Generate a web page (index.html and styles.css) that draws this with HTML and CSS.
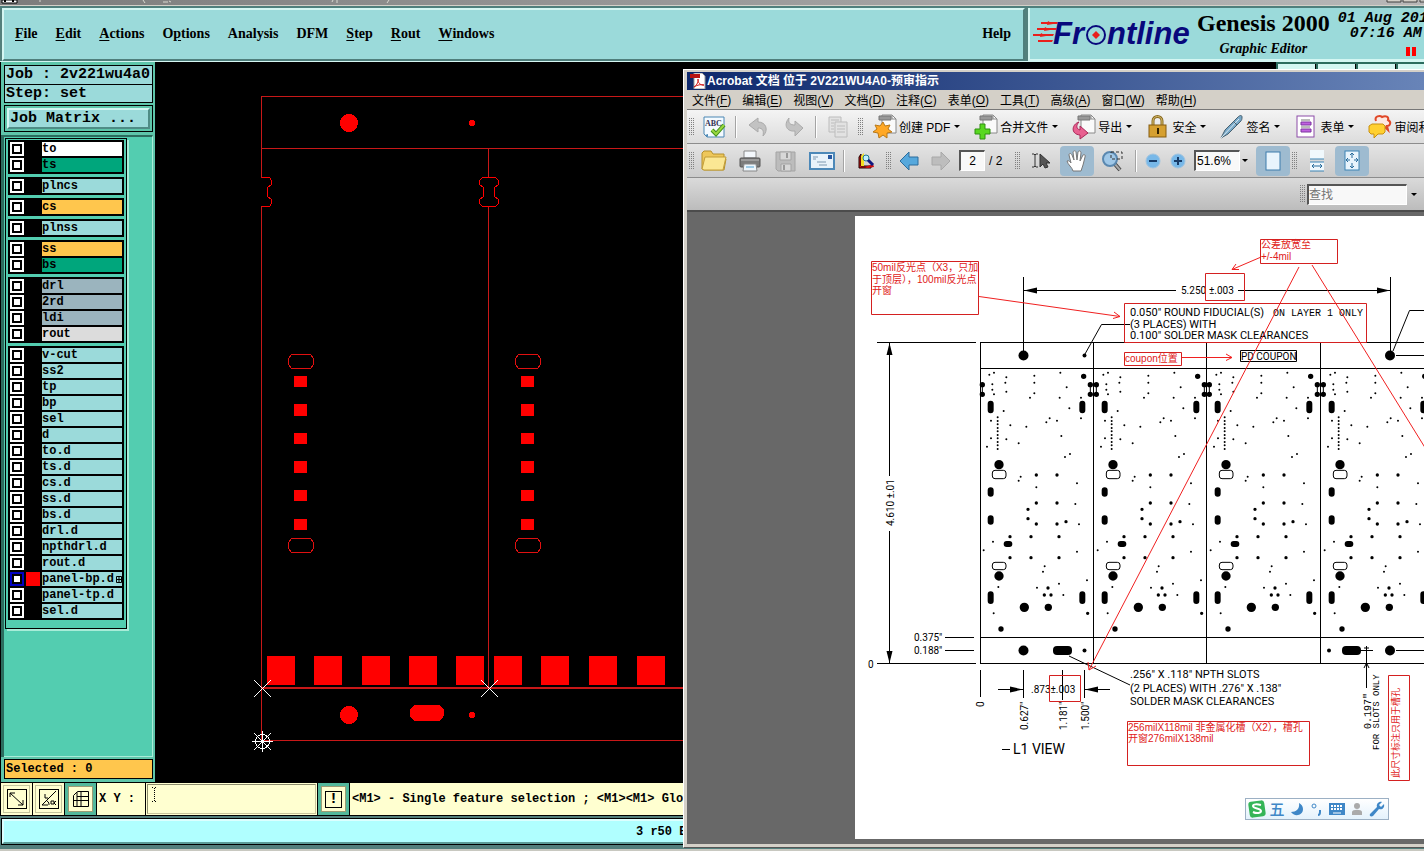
FILE: index.html
```html
<!DOCTYPE html>
<html lang="zh-CN">
<head>
<meta charset="utf-8">
<title>Genesis 2000 Graphic Editor</title>
<link rel="stylesheet" href="styles.css">
</head>
<body>
<div class="genesis">
  <div class="frame-title">
    <svg class="frame-marks" width="420" height="5"><path d="M2 0h15v3H2z" fill="#fff" stroke="#000"/><path d="M5 0v2M13 0v2" stroke="#000" stroke-width="2"/><path d="M40 0v2M143 0l2 3M163 2h5M169 1l2 1M333 0l-1 2M337 0v3M389 0l-2 3" stroke="#d8d8d0" fill="none"/></svg>
    <svg width="38" height="5"><path d="M1 0v2h14V0M17 0v2h14V0M34 0v2h6" fill="#d4d0c8" stroke="#404040"/></svg>
  </div>
  <header class="top">
    <nav class="menubar">
      <button><u>F</u>ile</button><button><u>E</u>dit</button><button><u>A</u>ctions</button><button>O<u>p</u>tions</button><button>Analysis</button><button>DFM</button><button><u>S</u>tep</button><button><u>R</u>out</button><button><u>W</u>indows</button><button class="help">Help</button>
    </nav>
    <div class="brand">
      <svg class="logo" width="164" height="40" role="img" aria-label="Frontline">
        <g fill="#e8201c"><path d="M8 6h17l-1 2H8zM4 12h20l-1 2H4zM0 18h21l-1 2H0zM5 24h15l-1 2H5z"/><path d="M15 5l5 3-6 1zM12 11l5 3-6 1zM8 17l5 3-6 1z"/></g>
        <g class="logo-text"><text x="20" y="28">Fr</text><text x="74" y="28">ntline</text></g>
        <circle cx="63" cy="19" r="9" fill="#9bdada" stroke="#08087c" stroke-width="2"/>
        <path d="M63 15l4 4-4 4-4-4z" fill="#e8201c"/>
      </svg>
      <div class="product"><strong>Genesis 2000</strong><em>Graphic Editor</em></div>
      <div class="clock"><span>01 Aug 2012</span><span>07:16 AM</span><svg width="11" height="9"><path d="M0 0h4v9H0zM6 0h4v9H6z" fill="#f00"/></svg></div>
    </div>
  </header>
  <div class="work">
    <aside class="side">
      <div class="job"><div>Job : 2v221wu4a0</div><div>Step: set</div></div>
      <div class="matrix"><button>Job Matrix ...</button></div>
      <div class="layer-well">
        <div class="layers" id="layers"></div>
      </div>
      <div class="selected">Selected : 0</div>
    </aside>
    <svg class="board" aria-label="Board view">
      <defs>
        <g id="pads"><g fill="none" stroke="#e01010"><path d="M291.500 354.500h19l3 4v6l-3 4h-19l-3-4v-6zM291.500 538.500h19l3 4v6l-3 4h-19l-3-4v-6z"/></g><path fill="#f00" d="M294 376h13v11h-13zM294 404h13v12h-13zM294 433h13v11h-13zM294 461h13v12h-13zM294 490h13v11h-13zM294 519h13v11h-13z"/></g>
      </defs>
      <g transform="translate(-155 -62)">
        <g fill="none" stroke="#c81818">
          <path d="M900 96.500H261.500V178M261.500 206V740.500H900M261 148.500H900M488.500 148V178M488.500 206V688"/>
          <path d="M261 688H900" stroke-width="2"/>
          <path d="M261.500 177.500h8l2 3v4l-4 3v9l4 3v4l-2 3h-8" stroke="#f00"/>
          <path d="M482.500 177.500h13l3 3v4l-4 3v9l4 3v4l-3 3h-13l-3-3v-4l4-3v-9l-4-3v-4z" stroke="#f00"/>
        </g>
        <g fill="#f00">
          <circle cx="349" cy="123" r="9"/><circle cx="472" cy="123" r="3"/><circle cx="349" cy="715" r="9"/><circle cx="472" cy="715" r="3"/>
          <rect x="410" y="705" width="34" height="16" rx="7"/>
          <path d="M267 656h28v29h-28zM314 656h28v29h-28zM362 656h28v29h-28zM409 656h28v29h-28zM456 656h28v29h-28zM494 656h28v29h-28zM541 656h28v29h-28zM589 656h28v29h-28zM637 656h28v29h-28z"/>
        </g>
        <use href="#pads"/><use href="#pads" x="227"/>
        <path d="M254 680l17 17M271 680l-17 17M481 680l17 17M498 680l-17 17M254 733l17 17M271 733l-17 17M262.500 731v21M252 741.500h21" stroke="#fff" fill="none"/>
        <circle cx="262.500" cy="741.500" r="7" fill="none" stroke="#fff"/>
      </g>
    </svg>
    <div class="right-tabs"><i></i><i></i><i></i><i></i></div>
  </div>
  <div class="command">
    <button class="tool" aria-label="Snap"><svg width="20" height="20"><rect x=".5" y=".5" width="19" height="19"/><path d="M3 4l13 12M3 8V4h5M16 11v5h-5"/></svg></button>
    <button class="tool" aria-label="Angle"><svg width="20" height="20"><rect x=".5" y=".5" width="19" height="19"/><path d="M17 2L3 16h6M6 5v4h3M8 12c2 1 2 3 2 4M12 12h3v3h-3zM17 12l-2 2 2 2"/></svg></button>
    <button class="tool teal" aria-label="Grid"><svg width="16" height="16"><path d="M.5 4.500l4-4h11v15H.5zM8 0v16M0 9.500h16M4 5.500h11M4 1v15"/></svg></button>
    <label class="xy" for="xy">X Y :</label>
    <div class="xy-box"><svg width="5" height="15"><path d="M0 .5h2M3 .5h2M2.500 1v13M0 14.500h2M3 14.500h2" fill="none" stroke="#000" stroke-dasharray="1 1"/></svg><input id="xy" type="text"></div>
    <button class="tool teal bang" aria-label="Alert"><b>!</b></button>
    <div class="message">&lt;M1&gt; - Single feature selection ; &lt;M1&gt;&lt;M1&gt; Global feature selection</div>
  </div>
  <div class="status"><span>3 r50 Bottom</span></div>
</div>

<section class="acrobat">
  <div class="ac-title">
    <svg width="16" height="16"><path d="M4 0h8l3 3v13H4z" fill="#fff" stroke="#999"/><path d="M0 1h10v4H0z" fill="#b81414"/><path d="M4 14c3-2 5-6 4-8-1 3 3 7 6 6-3-1-7 0-10 2z" fill="none" stroke="#d01818"/></svg>
    <h1>Acrobat 文档 位于 2V221WU4A0-预审指示</h1>
  </div>
  <nav class="ac-menu">
    <button>文件(<u>F</u>)</button><button>编辑(<u>E</u>)</button><button>视图(<u>V</u>)</button><button>文档(<u>D</u>)</button><button>注释(<u>C</u>)</button><button>表单(<u>O</u>)</button><button>工具(<u>T</u>)</button><button>高级(<u>A</u>)</button><button>窗口(<u>W</u>)</button><button>帮助(<u>H</u>)</button>
  </nav>
  <div class="bar bar-light">
    <i class="grip"></i>
    <button class="ib" aria-label="拼写检查"><svg width="24" height="24"><path d="M2 2h20v20H5l-3-3z" fill="#f4faff" stroke="#4a87b4"/><path d="M3 20l3-1v3z" fill="#4a87b4"/><text x="3" y="11" class="abc">ABC</text><path d="M10 15l4 4 8-9" stroke="#3f8f1a" stroke-width="4" fill="none"/><path d="M10 15l4 4 8-9" stroke="#9ad840" stroke-width="2" fill="none"/></svg></button>
    <i class="sep"></i>
    <button class="ib" aria-label="撤消"><svg width="24" height="24"><path d="M3 10l9-7v4c8 0 11 8 5 14 1-5 0-8-5-8v4z" fill="#c2c2c2" stroke="#aaa"/></svg></button>
    <button class="ib" aria-label="重做"><svg width="24" height="24"><path d="M21 13l-8 8v-5C5 17 1 10 7 3c-1 5 1 7 6 7V6z" fill="#c2c2c2" stroke="#aaa"/></svg></button>
    <i class="sep"></i>
    <button class="ib" aria-label="复制"><svg width="24" height="24"><g fill="#e2e2e2" stroke="#bcbcbc"><path d="M3 2h12v15H3z"/><path d="M9 7h12v15H9z"/><path d="M5 5h8M5 8h3M5 11h3M5 14h3M11 11h8M11 14h8M11 17h8"/></g></svg></button>
    <i class="grip wide"></i>
    <button class="tb"><svg width="26" height="26"><use href="#file"/><path d="M12 7l2 4 5-1-2 4 4 3-5 1 0 5-4-3-4 3-1-5-5-1 4-3-2-4 5 1z" transform="translate(-1 1)" fill="#ffa826" stroke="#b87818"/></svg><span>创建 PDF</span><i class="caret"></i></button>
    <button class="tb"><svg width="26" height="26"><use href="#file"/><path d="M7 10h5v5h5v5h-5v5H7v-5H2v-5h5z" fill="#58d820" stroke="#2f8f10"/></svg><span>合并文件</span><i class="caret"></i></button>
    <button class="tb"><svg width="26" height="26"><use href="#file"/><path d="M8 8c-3 3-3 7 1 8v-4l8 7-8 6v-4C-1 20 1 10 8 8z" fill="#e86090" stroke="#a82858"/></svg><span>导出</span><i class="caret"></i></button>
    <button class="tb"><svg width="26" height="26"><path d="M8 12V7c0-6 9-6 9 0v5" fill="none" stroke="#8a6a20" stroke-width="3"/><path d="M8 12V7c0-6 9-6 9 0v5" fill="none" stroke="#d8c070"/><rect x="4" y="11" width="17" height="12" fill="#d6a030" stroke="#855c10"/><path d="M12 14h2v6h-2z" fill="#332200"/></svg><span>安全</span><i class="caret"></i></button>
    <button class="tb"><svg width="26" height="26"><path d="M2 24l4-8L19 3c2-2 4-2 4 0s0 3-2 5L9 20z" fill="#78a8c8" stroke="#47606f"/><path d="M2 24L20 5" stroke="#dcecf4"/><path d="M14 7l4 4" stroke="#47606f"/></svg><span>签名</span><i class="caret"></i></button>
    <button class="tb"><svg width="26" height="26"><rect x="4" y="2" width="17" height="21" fill="#fff" stroke="#8c4ca8"/><path d="M8 6h9M8 13h9" stroke="#777"/><path d="M8 8h10v3H8zM8 15h10v3H8z" fill="#c060e0" stroke="#7c34a0"/></svg><span>表单</span><i class="caret"></i></button>
    <button class="tb"><svg width="26" height="26"><path d="M9 7c-2-5 4-6 6-4 4-2 7 0 6 3 4 2 2 6-1 6l1 4-4-4H12" fill="#fde8e0" stroke="#e04828" stroke-width="2"/><path d="M5 10h11l2 2v6l-2 2H11l-4 4v-4H4l-2-2v-6z" fill="#ffd030" stroke="#c89010"/></svg><span>审阅和注释</span><i class="caret"></i></button>
  </div>
  <div class="bar bar-mid">
    <i class="grip"></i>
    <button class="ib" aria-label="打开"><svg width="26" height="24"><path d="M1 20V4l2-2h7l2 3h11v3l2 2-2 11H3z" fill="#eec75a" stroke="#b4902c"/><path d="M1 20L4 8h21l-3 13H3z" fill="#fbe794" stroke="#c29d38"/></svg></button>
    <button class="ib" aria-label="打印"><svg width="24" height="24"><path d="M6 2h12v7H6z" fill="#f4f8fc" stroke="#888"/><rect x="2" y="9" width="20" height="9" rx="1" fill="#7c7c7c" stroke="#555"/><path d="M3 11h18" stroke="#bbb"/><path d="M6 15h12l1 7H5z" fill="#eef6fc" stroke="#888"/><path d="M8 18h8" stroke="#50a0d0"/></svg></button>
    <button class="ib" aria-label="保存"><svg width="24" height="24"><path d="M2 3h19v19H4l-2-2z" fill="#bcbcbc" stroke="#a4a4a4"/><path d="M6 3h11v8H6zM7 15h10v7H7z" fill="#d8d8d8" stroke="#a4a4a4"/><path d="M13 4v5M10 16v5" stroke="#999" stroke-width="2"/></svg></button>
    <button class="ib" aria-label="电子邮件"><svg width="26" height="20"><rect x="1" y="2" width="24" height="16" fill="#e8f2fa" stroke="#4c88b8" stroke-width="2"/><path d="M19 4h4v4h-4z" fill="#2858a0"/><path d="M4 6h5M4 8h3M8 11h9M10 14h8" stroke="#7c98b0"/></svg></button>
    <i class="sep"></i>
    <button class="ib" aria-label="管理器"><svg width="18" height="18"><path d="M2 5l2-3v12h10v2H2z" fill="#c01818" stroke="#200"/><path d="M4 4l3-3v13H4z" fill="#f4e020"/><path d="M8 15l8-3 1 3-7 1z" fill="#d01010"/><circle cx="9" cy="6" r="3" fill="#bfefff" stroke="#207890"/><path d="M11 8l5 5" stroke="#101880" stroke-width="3"/></svg></button>
    <i class="grip"></i>
    <button class="ib nar" aria-label="上一页"><svg width="20" height="20"><path d="M1 10l9-9v5h9v8h-9v5z" fill="#56a8dc" stroke="#2c6c9c"/></svg></button>
    <button class="ib nar" aria-label="下一页"><svg width="20" height="20"><path d="M19 10l-9-9v5H1v8h9v5z" fill="#bdbdbd" stroke="#a8a8a8"/></svg></button>
    <input class="field page-no" type="text" value="2" aria-label="页码"><span class="page-of">/ 2</span>
    <i class="grip"></i>
    <button class="ib cursor" aria-label="选择"><svg width="20" height="18"><path d="M1 2h2l1 1 1-1h2M1 15h2l1-1 1 1h2M4 3v11" stroke="#333" fill="none"/><path d="M9 2v13l3-3 2 4 3-1-2-4h4z" fill="#555" stroke="#333"/></svg></button>
    <button class="ib hot" aria-label="手形"><svg width="24" height="24"><path d="M8 22c-1-4-5-6-6-10 2-1 3 1 4 2L4 6c0-2 2-2 3 0l2 5-1-8c1-2 3-1 3 0l1 8 1-8c1-2 3-1 3 1l-1 8 3-6c1-1 3 0 2 2l-2 8-2 6z" fill="#fff" stroke="#777"/></svg></button>
    <button class="ib mag" aria-label="缩放"><svg width="24" height="24"><path d="M13 14l6 7" stroke="#444" stroke-width="4"/><path d="M13 14l6 7" stroke="#aaa" stroke-width="2"/><circle cx="9" cy="10" r="7" fill="#a0c8e8" stroke="#5a88b0" stroke-width="2"/><path d="M10 3h11v7H10z" fill="none" stroke="#333" stroke-dasharray="3 2"/></svg></button>
    <i class="sep"></i>
    <button class="ib rnd" aria-label="缩小"><svg width="16" height="16"><circle cx="8" cy="8" r="7" fill="#78b8e8" stroke="#a0c4e0"/><path d="M4 8h8" stroke="#183c68" stroke-width="2"/></svg></button>
    <button class="ib rnd" aria-label="放大"><svg width="16" height="16"><circle cx="8" cy="8" r="7" fill="#78b8e8" stroke="#a0c4e0"/><path d="M4 8h8M8 4v8" stroke="#183c68" stroke-width="2"/></svg></button>
    <input class="field zoom" type="text" value="51.6%" aria-label="缩放比例"><i class="caret"></i>
    <button class="ib hot one" aria-label="单页"><svg width="18" height="22"><rect x="2" y="2" width="14" height="18" fill="#e8f4fc" stroke="#3c7cac"/></svg></button>
    <i class="grip"></i>
    <button class="ib" aria-label="适合宽度"><svg width="20" height="24"><path d="M3 1h14v9H3zM3 13h14v9H3z" fill="#f0f8fc"/><path d="M3 10h14M3 13h14M3 22h14" stroke="#3c84b4"/><path d="M5 17h10M7 15l-2 2 2 2M13 15l2 2-2 2" fill="none" stroke="#286c9c"/></svg></button>
    <button class="ib hot" aria-label="适合页面"><svg width="20" height="24"><rect x="3" y="2" width="14" height="19" fill="#e8f4fc" stroke="#3c84b4"/><path d="M10 4v5M8 6l2-2 2 2M10 14v5M8 17l2 2 2-2M4 11h4M6 9l-2 2 2 2M12 11h4M14 9l2 2-2 2" fill="none" stroke="#286c9c"/></svg></button>
  </div>
  <div class="bar bar-find">
    <i class="grip"></i>
    <input class="field find" type="text" placeholder="查找" aria-label="查找"><i class="caret"></i>
  </div>
  <div class="doc">
    <svg class="sheet" aria-label="L1 VIEW">
      <defs>
        <g id="file"><path d="M10 1h10l4 4v14H10z" fill="#fafafa" stroke="#8a8a8a"/><path d="M20 1v4h4" fill="none" stroke="#8a8a8a"/><path d="M7 2h12v4H7z" fill="#999" stroke="#777"/></g>
        <g id="cell">
          <g transform="scale(.33333)">
            <g class="dots">
              <path stroke-width="6" d="M28 434h0M42 428h0M79 442h0M76 458h0M37 463h0M37 479h0M42 493h0M79 485h0M163 437h0M163 458h0M163 490h0M150 503h0M241 428h0M260 472h0M239 503h0M268 535h0M303 503h0M303 565h0M71 543h0M33 572h0M91 586h0M139 590h0M199 577h0M209 565h0M231 572h0M244 618h0M33 625h0M79 628h0M116 640h0M21 650h0M270 672h0M255 681h0M122 740h0M116 752h0M169 772h0M291 760h0M39 935h0M11 961h0M291 965h0M194 1009h0M189 1025h0M321 1051h0M237 1061h0M171 1073h0M55 1071h0M250 1095h0M41 1150h0M286 822h0M297 883h0"/>
              <path stroke-width="6" d="M53 562h0M53 573h0M53 583h0M53 594h0M53 604h0M53 615h0M53 625h0M53 636h0M53 646h0M53 657h0"/>
              <path stroke-width="10" d="M169 735h0M231 735h0M169 819h0M231 819h0M144 838h0M144 866h0M169 882h0M231 882h0M258 875h0M90 920h0M153 920h0M237 920h0M90 983h0M153 983h0M237 983h0M204 1074h0M193 1095h0M213 1095h0M323 1150h0"/>
              <path stroke-width="16" d="M311 439h0M7 464h0M7 493h0M331 464h0M331 493h0M63 1197h0"/>
              <path stroke-width="28" d="M57 704h0M57 1038h0M133 1132h0"/>
              <path stroke-width="22" d="M205 1132h0"/>
              <path stroke-width="18" d="M32 521v20M307 521v20M32 781v10M32 865v10M32 1093v20M307 1093v20M80 942h8"/>
            </g>
            <path d="M7 464v29M331 464v29" stroke="#000" stroke-width="3"/>
            <g fill="#fff" stroke="#000" stroke-width="3"><rect x="37" y="721" width="41" height="25" rx="8"/><rect x="37" y="997" width="41" height="22" rx="8"/></g>
          </g>
        </g>
      </defs>
      <g transform="translate(-855 -216)">
        <use href="#cell" x="980" y="230"/><use href="#cell" x="1094" y="230"/><use href="#cell" x="1207" y="230"/><use href="#cell" x="1321" y="230"/>
        <g fill="none" stroke="#000">
          <path d="M980 342.500H1500M980 368.500H1500M980 637.500H1500M980 663.500H1500M980.500 342V664M1093.500 342V664M1206.500 342V664M1320.500 342V664"/>
          <path d="M877 342.500h99M877 663.500h99M889.500 343V476M889.500 531V663M1023.500 277v74M1390.500 277v74M1024 290.500h152M1238 290.500h152M1085 354l16.500-29.500H1130M1393 351l16.500-40.500H1500M1396 355.500h100M1396 650.500h100M1361 650.500h12M1366.500 646v42M1364 668l2.500-5 2.500 5M1364 648h5M945 637.500h29M945 650.500h29M980.500 670v27M1023.500 670v28M1062.500 670v30M1084.500 670v28M998 689.500h26M1085 689.500h25M1069 656l61 29M1002 749.500h8"/>
          <path d="M1240.500 350.500h56v11h-56z"/>
        </g>
        <g>
          <circle cx="1023.500" cy="355.500" r="5"/><circle cx="1084.500" cy="355.500" r="2"/><circle cx="1390" cy="355.500" r="5"/><circle cx="1023.500" cy="650.500" r="5"/><circle cx="1084.500" cy="650.500" r="2"/><circle cx="1390" cy="650.500" r="5"/><circle cx="1329" cy="650.500" r="2"/>
          <rect x="1053" y="646" width="19" height="9" rx="4"/><rect x="1342" y="646" width="19" height="9" rx="4"/>
          <path d="M889.500 343l3 12h-6zM889.500 663l3-12h-6zM1024 290.500l13-3v6zM1390 290.500l-13-3v6zM1023 689.500l-13-3v6zM1085 689.500l13-3v6z"/>
        </g>
        <g class="cad">
          <text x="1181" y="294" class="small">5.250</text><text x="1209" y="294" class="small">±.003</text>
          <text x="1130" y="316">0.050" ROUND FIDUCIAL(S)</text><text x="1130" y="328">(3 PLACES) WITH</text><text x="1130" y="339">0.100" SOLDER MASK CLEARANCES</text>
          <text x="1241" y="360" class="small">PD COUPON</text>
          <text x="914" y="641" class="small">0.375"</text><text x="914" y="654" class="small">0.188"</text><text x="868" y="668" class="small">0</text>
          <text x="1031" y="693" class="small">.873±.003</text>
          <text x="1130" y="678">.256" X .118" NPTH SLOTS</text><text x="1130" y="692">(2 PLACES) WITH .276" X .138"</text><text x="1130" y="705">SOLDER MASK CLEARANCES</text>
          <text x="1013" y="754" class="view">L1 VIEW</text>
          <text transform="translate(894 526) rotate(-90)" class="small">4.610 ±.01</text>
          <text transform="translate(984 707) rotate(-90)" class="small">0</text>
          <text transform="translate(1028 730) rotate(-90)" class="small">0.627"</text>
          <text transform="translate(1067 730) rotate(-90)" class="small">1.181"</text>
          <text transform="translate(1089 730) rotate(-90)" class="small">1.500"</text>
        </g>
        <g class="plot">
          <text x="1273" y="316">ON LAYER 1 ONLY</text>
          <text transform="translate(1371 729) rotate(-90)">0.197"</text>
          <text transform="translate(1379 750) rotate(-90)" class="tiny">FOR SLOTS ONLY</text>
        </g>
        <g fill="none" stroke="#d42020">
          <path d="M871.500 261.500h107v53h-107zM1260.500 239.500h77v24h-77zM1205.500 273.500h39v27h-39zM1124.500 303.500h242v39h-242zM1124.500 352.500h57v13h-57zM1049.500 675.500h31v26h-31zM1127.500 721.500h182v44h-182zM1388.500 675.500h21v105h-21z"/>
          <path d="M979 296.500l141 20M1114 312l6 4.500-7 2M1260 257.500l-28 12M1236 264l-4 5.500h7M1182 357.500h50M1226 354l6 3.500-6 3M1299 267L1089 670M1088 662l1 8 7-4M1312 265L1424 446 1530 617" stroke="#f02020"/>
        </g>
        <g class="note">
          <text x="872" y="271">50mil反光点（X3，只加</text><text x="872" y="283">于顶层），100mil反光点</text><text x="872" y="294">开窗</text>
          <text x="1261" y="248">公差放宽至</text><text x="1261" y="260">+/-4mil</text>
          <text x="1125" y="362">coupon位置</text>
          <text x="1128" y="731">256milX118mil 非金属化槽（X2），槽孔</text><text x="1128" y="742">开窗276milX138mil</text>
          <text transform="translate(1399 778) rotate(-90)" class="tiny">此尺寸标注只用于槽孔</text>
        </g>
      </g>
    </svg>
  </div>
</section>

<div class="ime">
  <svg width="20" height="20"><rect x="2" y="2" width="16" height="16" rx="3" fill="#35b558" transform="rotate(-8 10 10)"/><path d="M14 6c-4-1-8-1-8 1 0 3 8 2 8 5 0 2-4 3-8 1" fill="none" stroke="#fff" stroke-width="2"/></svg>
  <span>五</span>
  <svg width="20" height="20"><path d="M12 4c1 6-3 9-8 9 3 5 12 4 12-3 0-3-2-5-4-6z" fill="#3f87c7"/></svg>
  <svg width="20" height="20"><circle cx="7" cy="7" r="2" fill="none" stroke="#3f87c7"/><path d="M13 11v2c0 2-1 3-2 3" fill="none" stroke="#3f87c7" stroke-width="2"/></svg>
  <svg width="20" height="20"><rect x="2" y="4" width="16" height="12" fill="#3f87c7"/><path d="M4 7h12M4 10h12" stroke="#fff" stroke-width="2" stroke-dasharray="2 1"/><path d="M6 14h8" stroke="#fff"/></svg>
  <svg width="20" height="20"><circle cx="10" cy="7" r="3" fill="#aaa"/><path d="M5 13c0-3 10-3 10 0v3H5z" fill="#aaa"/></svg>
  <svg width="20" height="20"><path d="M3 15l7-7c-1-3 2-6 5-5l-3 3 2 2 3-3c1 4-2 6-5 5l-6 7c-2 1-4 0-3-2z" fill="#3f87c7"/></svg>
</div>
<script src="layers.js"></script>
</body>
</html>
```

FILE: styles.css
```css
* { box-sizing: border-box; }
html, body { margin: 0; height: 100%; overflow: hidden; background: #000; }
button, input { margin: 0; padding: 0; border: 0; background: none; font: inherit; color: inherit; border-radius: 0; }
button { display: flex; align-items: center; flex: none; white-space: nowrap; }
u { text-underline-offset: 2px; }

.genesis { display: flex; flex-direction: column; height: 100vh; font-family: "Liberation Mono", monospace; font-weight: bold; }
.frame-title { display: flex; justify-content: space-between; height: 6px; background: linear-gradient(90deg, #7c7c7c, #b8b8b8); border-bottom: 1px solid #d4d0c8; overflow: hidden; }
.frame-title svg { display: block; }

.top { display: flex; gap: 3px; height: 56px; flex: none; background: #53807c; border-top: 2px solid #4f7f7c; border-bottom: 1px solid #d4f6f2; }
.menubar { flex: 1; display: flex; align-items: center; gap: 18px; padding: 0 12px 2px 11px; margin-left: 2px; background: #9bdada; border: 2px solid #d4f6f2; border-right-color: #4f7f7c; border-bottom-color: #4f7f7c; font: bold 14px "Liberation Serif", serif; }
.help { margin-left: auto; }
.brand { width: 396px; flex: none; display: flex; padding-left: 3px; background: #9bdada; border-left: 2px solid #d4f6f2; border-bottom: 2px solid #d4f6f2; overflow: hidden; }
.logo { margin-top: 8px; flex: none; overflow: visible; }
.logo-text { font: italic bold 31px "Liberation Sans", sans-serif; fill: #08087c; }
.product { display: flex; flex-direction: column; align-items: center; font-family: "Liberation Serif", serif; }
.product strong { font-size: 24px; line-height: 30px; white-space: nowrap; }
.product em { font-size: 14px; line-height: 22px; }
.clock { display: flex; flex-direction: column; font-style: italic; font-size: 15px; line-height: 15px; padding: 3px 0 0 8px; white-space: nowrap; }
.clock span + span { padding-left: 12px; }
.clock svg { margin: 6px 0 0 68px; }

.work { flex: 1; display: flex; min-height: 0; }
.side { width: 155px; flex: none; display: flex; flex-direction: column; padding: 3px 2px 3px 3px; background: #5ec5aa; border-left: 1px solid #000; font-size: 12px; }
.job { border: 1px solid #000; font-size: 15px; line-height: 18px; background: #9bdada; white-space: nowrap; height: 38px; }
.job div { padding-left: 1px; height: 18px; }
.job div + div { border-top: 1px solid #000; }
.matrix { margin-top: 2px; padding: 2px; border: 1px solid #000; height: 27px; }
.matrix button { width: 100%; height: 21px; padding-left: 1px; background: #9bdada; border: 2px solid #d4f6f2; border-right-color: #4f8c86; border-bottom-color: #4f8c86; font-size: 15px; }
.layer-well { flex: 1; margin-top: 3px; padding: 1px 0 0 1px; background: #53cdb0; border-top: 2px solid #2c6c5e; border-right: 1px solid #a8ecd8; border-bottom: 1px solid #a8ecd8; box-shadow: -3px 0 #2c6c5e; min-height: 0; }
.layers { width: 122px; padding: 1px 2px 8px; border: 1px solid #000; box-shadow: 2px 2px #a8ecd8; display: flex; flex-direction: column; gap: 3px; }
.group { display: flex; flex-direction: column; gap: 2px; padding: 2px; background: #000; }
.layer { display: grid; grid-template-columns: 14px 14px 1fr; column-gap: 2px; height: 14px; }
.layer input { appearance: none; width: 14px; height: 14px; background: #fff; border: 2px solid #fff; box-shadow: inset 0 0 0 2px #000; }
.layer input:checked { border-color: #0000c0; }
.layer input:checked + i { background: #f00; }
.layer label { line-height: 14px; background: #9bdada; display: flex; gap: 2px; align-items: center; }
.white label { background: #fff; }
.green label { background: #00a67c; }
.orange label { background: #ffc64d; }
.slate label { background: #9bb4be; }
.grey label { background: #dcdcdc; }
.selected { height: 20px; margin-top: 2px; padding-left: 1px; line-height: 18px; border: 1px solid #000; background: #ffc64d; }

.board { flex: 1; min-width: 0; height: 100%; display: block; shape-rendering: crispEdges; }
.right-tabs { width: 148px; flex: none; height: 12px; display: flex; gap: 2px; padding: 2px 0 0 2px; background: #2c6c5e; overflow: hidden; }
.right-tabs i { width: 38px; flex: none; background: #d4f6f2; border-right: 1px solid #000; }

.command { flex: none; display: flex; align-items: stretch; height: 34px; padding: 1px 0 1px 1px; gap: 1px; background: #000; font-size: 12px; }
.tool { width: 31px; justify-content: center; background: #ffffd0; border: 3px solid #ffffd0; outline: 1px solid #c4c49c; outline-offset: -3px; }
.tool.teal { border-color: #53b89c; outline-color: #9c9c74; outline-offset: -4px; }
.tool svg { fill: none; stroke: #000; }
.bang b { width: 17px; height: 17px; border: 1px solid #000; line-height: 15px; font-size: 15px; text-align: center; }
.xy { width: 48px; padding-left: 2px; line-height: 32px; background: #ffffd0; white-space: pre; }
.xy-box { width: 171px; display: flex; padding: 2px 4px; background: #ffffd0; border: 2px solid #c8c49c; border-top-color: #8c8c6c; border-left-color: #8c8c6c; outline: 1px solid #ffffd0; outline-offset: -1px; }
.xy-box input { flex: 1; min-width: 0; }
.message { flex: 1; padding-left: 2px; line-height: 32px; background: #ffffd0; white-space: nowrap; overflow: hidden; }
.status { flex: none; height: 35px; padding: 3px 1px 5px 2px; background: #537f7c; border-bottom: 2px solid #c8c8c0; font-size: 12px; }
.status span { display: block; height: 25px; padding-left: 632px; line-height: 22px; background: #b0ffff; border: 2px solid #dcffff; border-bottom-color: #5c9c98; outline: 1px solid #000; white-space: nowrap; }

.acrobat { position: absolute; left: 683px; top: 69px; right: 0; bottom: 3px; display: flex; flex-direction: column; padding: 2px 0 3px 3px; background: #d4d0c8; border: 1px solid #fff; border-right: 0; border-bottom-color: #555; overflow: hidden; font: 12px "Liberation Sans", "Noto Sans CJK SC", sans-serif; color: #000; }
.ac-title { flex: none; display: flex; align-items: center; gap: 1px; height: 18px; padding-left: 3px; background: linear-gradient(90deg, #0e286c, #6884b8); color: #fff; }
.ac-title h1 { margin: 0; font-size: 12px; line-height: 18px; white-space: nowrap; }
.ac-menu { flex: none; display: flex; gap: 11px; height: 20px; padding-left: 5px; border-bottom: 1px solid #777; }
.bar { flex: none; display: flex; align-items: center; height: 34px; border-bottom: 1px solid #8c8c8c; white-space: nowrap; overflow: hidden; }
.bar > * { flex: none; }
.bar-light { background: linear-gradient(#f4f4f4, #dcdcdc); }
.bar-mid { background: linear-gradient(#e4e4e4, #cbcbcb); }
.bar-find { background: linear-gradient(#dadada, #bcbcbc); justify-content: flex-end; border-bottom: 2px solid #4c4c4c; }
.grip { width: 5px; height: 18px; margin: 0 2px; background: conic-gradient(transparent 75%, #808080 0) 0 0 / 2px 2px; }
.grip.wide { margin-right: 8px; }
.sep { width: 2px; height: 22px; margin: 0 3px; background: #a4a4a4; border-right: 1px solid #fff; }
.ib { width: 36px; height: 30px; justify-content: center; }
.ib.nar { width: 32px; }
.ib.cursor { width: 38px; }
.ib.rnd { width: 25px; }
.ib.mag { width: 38px; }
.ib.hot { width: 34px; background: #9ebbd0; border-radius: 4px; }
.one { margin-left: 4px; }
.tb svg { margin: 0 1px; }
.caret { margin: 0 12px 0 4px; border: 3px solid transparent; border-top-color: #000; border-bottom: 0; }
.field { height: 21px; background: #f8f8f8; border: 2px solid #555; border-right: 1px solid #fff; border-bottom: 1px solid #fff; }
.page-no { width: 26px; margin-left: 2px; text-align: center; }
.page-of { width: 28px; padding-left: 4px; }
.zoom { width: 46px; margin-left: 4px; padding-left: 1px; }
.zoom + .caret { margin: 0 4px 0 2px; }
.find { width: 100px; }
.find + .caret { margin: 0 7px 0 4px; }
.abc { font: bold 8px "Liberation Serif", serif; fill: #335; }
.doc { flex: 1; min-height: 0; display: flex; padding: 4px 0 5px 168px; background: #686868; }
.sheet { flex: 1; min-width: 0; height: 100%; display: block; background: #fff; overflow: hidden; }
.dots { fill: none; stroke: #000; stroke-linecap: round; }
.cad { font: 11px Roboto, sans-serif; }
.cad .small { font-size: 10px; }
.cad .view { font-size: 14px; }
.plot { font: 10px "Liberation Mono", monospace; }
.note { font: 10px "Liberation Sans", "Noto Sans CJK SC", sans-serif; fill: #e02020; }
.tiny { font-size: 9px; }

.ime { position: absolute; right: 35px; bottom: 31px; display: flex; align-items: center; height: 22px; padding: 0 1px; background: linear-gradient(#fff, #e4f2fc); border: 1px solid #9cb0c4; }
.ime span { width: 20px; font: 500 15px/18px "Noto Sans CJK SC", sans-serif; color: #3f87c7; text-align: center; }
```

FILE: layers.js
```js
const groups = [
  [["to", "white"], ["ts", "green"]],
  [["plncs", ""]],
  [["cs", "orange"]],
  [["plnss", ""]],
  [["ss", "orange"], ["bs", "green"]],
  [["drl", "slate"], ["2rd", "slate"], ["ldi", "slate"], ["rout", "grey"]],
  ["v-cut", "ss2", "tp", "bp", "sel", "d", "to.d", "ts.d", "cs.d", "ss.d", "bs.d",
    "drl.d", "npthdrl.d", "rout.d", "panel-bp.d", "panel-tp.d", "sel.d"].map(n => [n, ""])
];
const active = "panel-bp.d";
const mark = '<svg width="6" height="7"><path d="M.5.5h5v6h-5zM3 0v7M0 3.500h6" fill="none" stroke="#000"/></svg>';
document.getElementById("layers").innerHTML = groups.map(rows =>
  '<div class="group">' + rows.map(([name, tone]) =>
    `<div class="layer ${tone}"><input type="checkbox" id="l-${name}"${name === active ? " checked" : ""}><i></i><label for="l-${name}">${name}${name === active ? mark : ""}</label></div>`
  ).join("") + "</div>"
).join("");
```
